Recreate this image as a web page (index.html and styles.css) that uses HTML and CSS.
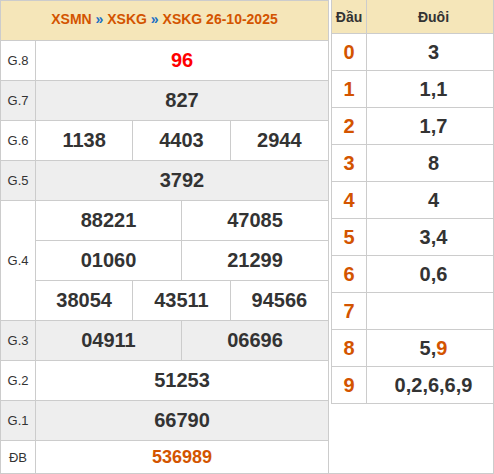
FILE: index.html
```html
<!DOCTYPE html>
<html lang="vi">
<head>
<meta charset="utf-8">
<title>XSKG 26-10-2025</title>
<link rel="stylesheet" href="styles.css">
</head>
<body>
<div class="page">
  <div class="kq">
    <div class="kq-head"><span class="crumb">XSMN <span class="sep">»</span> XSKG <span class="sep">»</span> XSKG 26-10-2025</span></div>
    <div class="row"><div class="lbl">G.8</div><div class="nums c1"><span class="n red">96</span></div></div>
    <div class="row alt"><div class="lbl">G.7</div><div class="nums c1"><span class="n">827</span></div></div>
    <div class="row"><div class="lbl">G.6</div><div class="nums c3"><span class="n">1138</span><span class="n">4403</span><span class="n">2944</span></div></div>
    <div class="row alt"><div class="lbl">G.5</div><div class="nums c1"><span class="n">3792</span></div></div>
    <div class="row multi"><div class="lbl">G.4</div>
      <div class="stack">
        <div class="nums c2"><span class="n">88221</span><span class="n">47085</span></div>
        <div class="nums c2"><span class="n">01060</span><span class="n">21299</span></div>
        <div class="nums c3"><span class="n">38054</span><span class="n">43511</span><span class="n">94566</span></div>
      </div>
    </div>
    <div class="row alt"><div class="lbl">G.3</div><div class="nums c2"><span class="n">04911</span><span class="n">06696</span></div></div>
    <div class="row"><div class="lbl">G.2</div><div class="nums c1"><span class="n">51253</span></div></div>
    <div class="row alt"><div class="lbl">G.1</div><div class="nums c1"><span class="n">66790</span></div></div>
    <div class="row last"><div class="lbl">ĐB</div><div class="nums c1"><span class="n db">536989</span></div></div>
  </div>
  <div class="loto-box">
    <div class="loto">
      <div class="lrow lhead"><div class="dau">Đầu</div><div class="duoi">Đuôi</div></div>
      <div class="lrow"><div class="dau">0</div><div class="duoi">3</div></div>
      <div class="lrow"><div class="dau">1</div><div class="duoi">1,1</div></div>
      <div class="lrow"><div class="dau">2</div><div class="duoi">1,7</div></div>
      <div class="lrow"><div class="dau">3</div><div class="duoi">8</div></div>
      <div class="lrow"><div class="dau">4</div><div class="duoi">4</div></div>
      <div class="lrow"><div class="dau">5</div><div class="duoi">3,4</div></div>
      <div class="lrow"><div class="dau">6</div><div class="duoi">0,6</div></div>
      <div class="lrow"><div class="dau">7</div><div class="duoi"></div></div>
      <div class="lrow"><div class="dau">8</div><div class="duoi"><span>5,<span class="hl">9</span></span></div></div>
      <div class="lrow"><div class="dau">9</div><div class="duoi">0,2,6,6,9</div></div>
    </div>
  </div>
</div>
</body>
</html>
```
FILE: styles.css
```css
* { box-sizing: border-box; }
html, body { margin: 0; padding: 0; background: #fff; }
body { font-family: "Liberation Sans", Arial, sans-serif; color: #333; }

.page {
  display: flex;
  width: 494px;
  height: 474px;
}

/* Left results table */
.kq {
  width: 329px;
  flex: none;
  border: 1px solid #ccc;
  border-bottom: none;
}
.kq-head {
  height: 40px;
  border-bottom: 1px solid #ccc;
  background: #f5e6b9;
  color: #d35400;
  font-weight: bold;
  font-size: 14px;
  display: flex;
  align-items: center;
  justify-content: center;
  padding-bottom: 3px;
}
.kq-head .sep { color: #1a6fc4; }

.row {
  display: grid;
  grid-template-columns: 35px 1fr;
  height: 40px;
  border-bottom: 1px solid #ccc;
}
.row.alt { background: #eee; }
.row.multi { height: auto; }
.row.last { height: 33px; }

.lbl {
  border-right: 1px solid #ccc;
  display: flex;
  align-items: center;
  justify-content: center;
  font-size: 13px;
  color: #333;
}

.nums { display: grid; height: 100%; }
.nums.c1 { grid-template-columns: 1fr; }
.nums.c2 { grid-template-columns: 1fr 1fr; }
.nums.c3 { grid-template-columns: 1fr 1fr 1fr; }
.n {
  display: flex;
  align-items: center;
  justify-content: center;
  font-weight: bold;
  font-size: 20px;
  color: #333;
  border-right: 1px solid #ccc;
}
.n:last-child { border-right: none; }
.n.red { color: #f00; }
.n.db { color: #d35400; font-size: 18px; }

.stack .nums { height: 40px; border-bottom: 1px solid #ccc; }
.stack .nums:last-child { height: 39px; border-bottom: none; }

/* Right loto table */
.loto-box {
  width: 165px;
  flex: none;
  border-right: 1px solid #ccc;
  border-bottom: 1px solid #ccc;
}
.loto {
  margin-left: 2px;
  border-left: 1px solid #ccc;
}
.lrow {
  display: grid;
  grid-template-columns: 35px 1fr;
  height: 37px;
  border-bottom: 1px solid #ccc;
}
.lrow.lhead {
  height: 34px;
  background: #f5e6b9;
}
.dau {
  border-right: 1px solid #ccc;
  display: flex;
  align-items: center;
  justify-content: center;
  color: #d35400;
  font-weight: bold;
  font-size: 20px;
}
.duoi {
  display: flex;
  align-items: center;
  justify-content: center;
  padding-left: 7px;
  font-weight: bold;
  font-size: 20px;
  color: #333;
}
.lhead .dau, .lhead .duoi {
  color: #333;
  font-size: 14px;
}
.duoi .hl { color: #d35400; }
```
